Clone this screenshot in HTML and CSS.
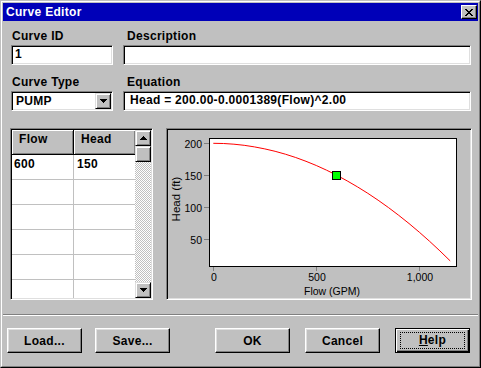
FILE: index.html
```html
<!DOCTYPE html>
<html lang="en">
<head>
    <meta charset="UTF-8">
    <title>Curve Editor</title>
    <link rel="stylesheet" href="styles.css">
</head>
<body>
<div class="window">
    <div class="frame">
        <!-- title bar -->
        <div class="titlebar">
            <span class="title">Curve Editor</span>
            <button class="close-btn">
                <svg width="8" height="7" viewBox="0 0 8 7" shape-rendering="crispEdges"><path d="M0 0h2v1H0z M6 0h2v1H6z M1 1h2v1H1z M5 1h2v1H5z M2 2h4v1H2z M3 3h2v1H3z M2 4h4v1H2z M1 5h2v1H1z M5 5h2v1H5z M0 6h2v1H0z M6 6h2v1H6z"/></svg>
            </button>
        </div>

        <!-- curve fields -->
        <div class="fields">
            <div class="label left">Curve ID</div>
            <div class="label right">Description</div>
            <div class="field id-field">1</div>
            <div class="field"></div>

            <div class="label left second">Curve Type</div>
            <div class="label right second">Equation</div>
            <div class="field select-field">
                <span class="select-text">PUMP</span>
                <span class="drop-btn">
                    <svg width="7" height="4" viewBox="0 0 7 4" shape-rendering="crispEdges"><path d="M0 0h7v1H6v1H5v1H4v1H3V3H2V2H1V1H0z"/></svg>
                </span>
            </div>
            <div class="field eq-field">Head = 200.00-0.0001389(Flow)^2.00</div>
        </div>

        <!-- data grid and chart -->
        <div class="main">
            <div class="grid-frame">
                <div class="cells">
                    <div class="row head-row">
                        <div class="cell hcell c1">Flow</div>
                        <div class="cell hcell c2">Head</div>
                    </div>
                    <div class="row"><div class="cell c1">600</div><div class="cell c2">150</div></div>
                    <div class="row"><div class="cell c1"></div><div class="cell c2"></div></div>
                    <div class="row"><div class="cell c1"></div><div class="cell c2"></div></div>
                    <div class="row"><div class="cell c1"></div><div class="cell c2"></div></div>
                    <div class="row"><div class="cell c1"></div><div class="cell c2"></div></div>
                    <div class="row"><div class="cell c1"></div><div class="cell c2"></div></div>
                </div>
                <div class="vscroll">
                    <div class="sbtn">
                        <svg width="7" height="4" viewBox="0 0 7 4" shape-rendering="crispEdges"><path d="M3 0h1v1h1v1h1v1h1v1H0V3h1V2h1V1h1z"/></svg>
                    </div>
                    <div class="sbtn thumb"></div>
                    <div class="track"></div>
                    <div class="sbtn">
                        <svg width="7" height="4" viewBox="0 0 7 4" shape-rendering="crispEdges"><path d="M0 0h7v1H6v1H5v1H4v1H3V3H2V2H1V1H0z"/></svg>
                    </div>
                </div>
            </div>

            <div class="chart-frame">
                <svg class="chart" width="302" height="168" viewBox="0 0 302 168">
                    <rect x="41.5" y="8.5" width="247" height="128" fill="#fff" stroke="#000"/>
                    <g stroke="#808080" shape-rendering="crispEdges">
                        <line x1="36" y1="13.5" x2="41" y2="13.5"/>
                        <line x1="36" y1="45.5" x2="41" y2="45.5"/>
                        <line x1="36" y1="77.5" x2="41" y2="77.5"/>
                        <line x1="36" y1="109.5" x2="41" y2="109.5"/>
                        <line x1="45.5" y1="137" x2="45.5" y2="141"/>
                        <line x1="148.5" y1="137" x2="148.5" y2="141"/>
                        <line x1="251.5" y1="137" x2="251.5" y2="141"/>
                    </g>
                    <g class="axis-text" text-anchor="end">
                        <text x="34" y="17.5">200</text>
                        <text x="34" y="49.5">150</text>
                        <text x="34" y="81.5">100</text>
                        <text x="34" y="113.5">50</text>
                    </g>
                    <g class="axis-text" text-anchor="middle">
                        <text x="46" y="151">0</text>
                        <text x="149" y="151">500</text>
                        <text x="252" y="151">1,000</text>
                        <text x="164" y="165">Flow (GPM)</text>
                        <text class="axis-title" transform="translate(12 69) rotate(-90)">Head (ft)</text>
                    </g>
                    <polyline fill="none" stroke="#f00" stroke-width="1" points="45.3,13.3 55.6,13.5 65.9,14.2 76.2,15.3 86.5,16.9 96.8,18.9 107.1,21.3 117.4,24.2 127.7,27.5 138,31.3 148.3,35.5 158.6,40.2 168.9,45.3 179.2,50.9 189.5,56.9 199.8,63.3 210.1,70.2 220.4,77.5 230.7,85.3 241,93.5 251.3,102.2 261.6,111.3 271.9,120.9 282.2,130.9"/>
                    <rect x="164.5" y="41.5" width="8" height="8" fill="#00ff00" stroke="#000" shape-rendering="crispEdges"/>
                </svg>
            </div>
        </div>

        <div class="separator"></div>

        <!-- buttons -->
        <div class="buttons">
            <button class="btn">Load...</button>
            <button class="btn gap-s">Save...</button>
            <button class="btn gap-l">OK</button>
            <button class="btn gap-m">Cancel</button>
            <button class="btn gap-m default"><span class="focus"><u>H</u>elp</span></button>
        </div>
    </div>
</div>
</body>
</html>
```

FILE: styles.css
```css
/* page */
body {
    margin: 0;
    font-family: "Liberation Sans", Arial, sans-serif;
    font-size: 12px;
    letter-spacing: 0.3px;
    font-weight: bold;
    color: #000;
    background: #c0c0c0;
}

button {
    font: inherit;
    letter-spacing: inherit;
    color: inherit;
    padding: 0;
    margin: 0;
}

/* window frame */
.window {
    width: 481px;
    height: 368px;
    box-sizing: border-box;
    border: 1px solid;
    border-color: #c0c0c0 #000 #000 #c0c0c0;
    background: #c0c0c0;
}

.frame {
    height: 100%;
    box-sizing: border-box;
    border: 1px solid;
    border-color: #fff #808080 #808080 #fff;
    padding: 1px;
}

/* title bar */
.titlebar {
    height: 18px;
    background: #0000b8;
    color: #fff;
    display: flex;
    align-items: center;
    justify-content: space-between;
    padding: 0 1px 0 3px;
}

.title {
    line-height: 18px;
}

.close-btn {
    width: 16px;
    height: 14px;
    box-sizing: border-box;
    background: #c0c0c0;
    border: 1px solid;
    border-color: #fff #000 #000 #fff;
    box-shadow: inset -1px -1px #808080;
    display: flex;
    align-items: center;
    justify-content: center;
}

/* fields */
.fields {
    display: grid;
    grid-template-columns: 102px 348px;
    column-gap: 10px;
    padding: 9px 0 0 8px;
}

.label {
    height: 13px;
    line-height: 13px;
    margin-bottom: 2px;
}

.label.left {
    padding-left: 1px;
}

.label.right {
    padding-left: 4px;
}

.label.second {
    margin-top: 11px;
}

.field {
    height: 20px;
    box-sizing: border-box;
    background: #fff;
    border: 1px solid;
    border-color: #808080 #fff #fff #808080;
    box-shadow: inset 1px 1px #000, inset -1px -1px #dfdfdf;
    line-height: 17px;
    padding-left: 3px;
}

.eq-field {
    padding-left: 6px;
}

.select-field {
    display: flex;
    padding: 1px;
}

.select-text {
    flex: 1;
    padding-left: 3px;
    line-height: 16px;
}

.drop-btn {
    width: 16px;
    height: 16px;
    box-sizing: border-box;
    background: #c0c0c0;
    border: 1px solid;
    border-color: #dfdfdf #000 #000 #dfdfdf;
    box-shadow: inset 1px 1px #fff, inset -1px -1px #808080;
    display: flex;
    align-items: center;
    justify-content: center;
}

/* grid */
.main {
    display: flex;
    margin-top: 17px;
    padding-left: 7px;
}

.grid-frame {
    width: 143px;
    height: 172px;
    box-sizing: border-box;
    border: 1px solid;
    border-color: #808080 #fff #fff #808080;
    box-shadow: inset 1px 1px #000, inset -1px -1px #dfdfdf;
    padding: 1px;
    display: flex;
    overflow: hidden;
}

.cells {
    flex: 1;
    background: #fff;
    overflow: hidden;
}

.row {
    display: flex;
    height: 25px;
}

.cell {
    box-sizing: border-box;
    height: 25px;
    border-bottom: 1px solid #c0c0c0;
    padding: 3px 0 0 2px;
    line-height: 13px;
}

.cell.c1 {
    width: 62px;
    border-right: 1px solid #c0c0c0;
}

.cell.c2 {
    flex: 1;
    padding-left: 3px;
}

.hcell {
    background: #c0c0c0;
    box-shadow: inset 1px 1px #fff, inset -1px -1px #808080;
    border-bottom: 1px solid #000;
    padding-left: 7px;
}

.hcell.c1 {
    border-right: 1px solid #000;
}

.hcell.c2 {
    padding-left: 7px;
}

/* scrollbar */
.vscroll {
    width: 16px;
    display: flex;
    flex-direction: column;
}

.sbtn {
    height: 16px;
    box-sizing: border-box;
    background: #c0c0c0;
    border: 1px solid;
    border-color: #dfdfdf #000 #000 #dfdfdf;
    box-shadow: inset 1px 1px #fff, inset -1px -1px #808080;
    display: flex;
    align-items: center;
    justify-content: center;
}

.track {
    flex: 1;
    background: repeating-conic-gradient(#c0c0c0 0 25%, #fff 0 50%) 0 0 / 2px 2px;
}

/* chart */
.chart-frame {
    width: 306px;
    height: 172px;
    box-sizing: border-box;
    margin-left: 13px;
    border: 1px solid;
    border-color: #808080 #fff #fff #808080;
    box-shadow: inset 1px 1px #000, inset -1px -1px #dfdfdf;
    padding: 1px;
}

.chart {
    display: block;
}

.axis-text {
    font-family: "Liberation Sans", Arial, sans-serif;
    font-size: 10.5px;
    font-weight: normal;
    letter-spacing: 0;
    fill: #000;
}

.axis-title {
    font-size: 11.5px;
}

/* bottom */
.separator {
    margin-top: 14px;
    border-top: 1px solid #808080;
    border-bottom: 1px solid #fff;
}

.buttons {
    display: flex;
    margin-top: 12px;
    padding-left: 4px;
}

.btn {
    width: 75px;
    height: 25px;
    box-sizing: border-box;
    background: #c0c0c0;
    border: 1px solid;
    border-color: #fff #000 #000 #fff;
    box-shadow: inset -1px -1px #808080, inset 1px 1px #dfdfdf;
}

.gap-s {
    margin-left: 13px;
}

.gap-l {
    margin-left: 45px;
}

.gap-m {
    margin-left: 15px;
}

.btn.default {
    border: 1px solid #000;
    box-shadow: inset 1px 1px #fff, inset -1px -1px #000, inset -2px -2px #808080;
    padding: 3px 4px;
}

.focus {
    display: block;
    height: 100%;
    box-sizing: border-box;
    border: 1px dotted #000;
    line-height: 15px;
}
```
